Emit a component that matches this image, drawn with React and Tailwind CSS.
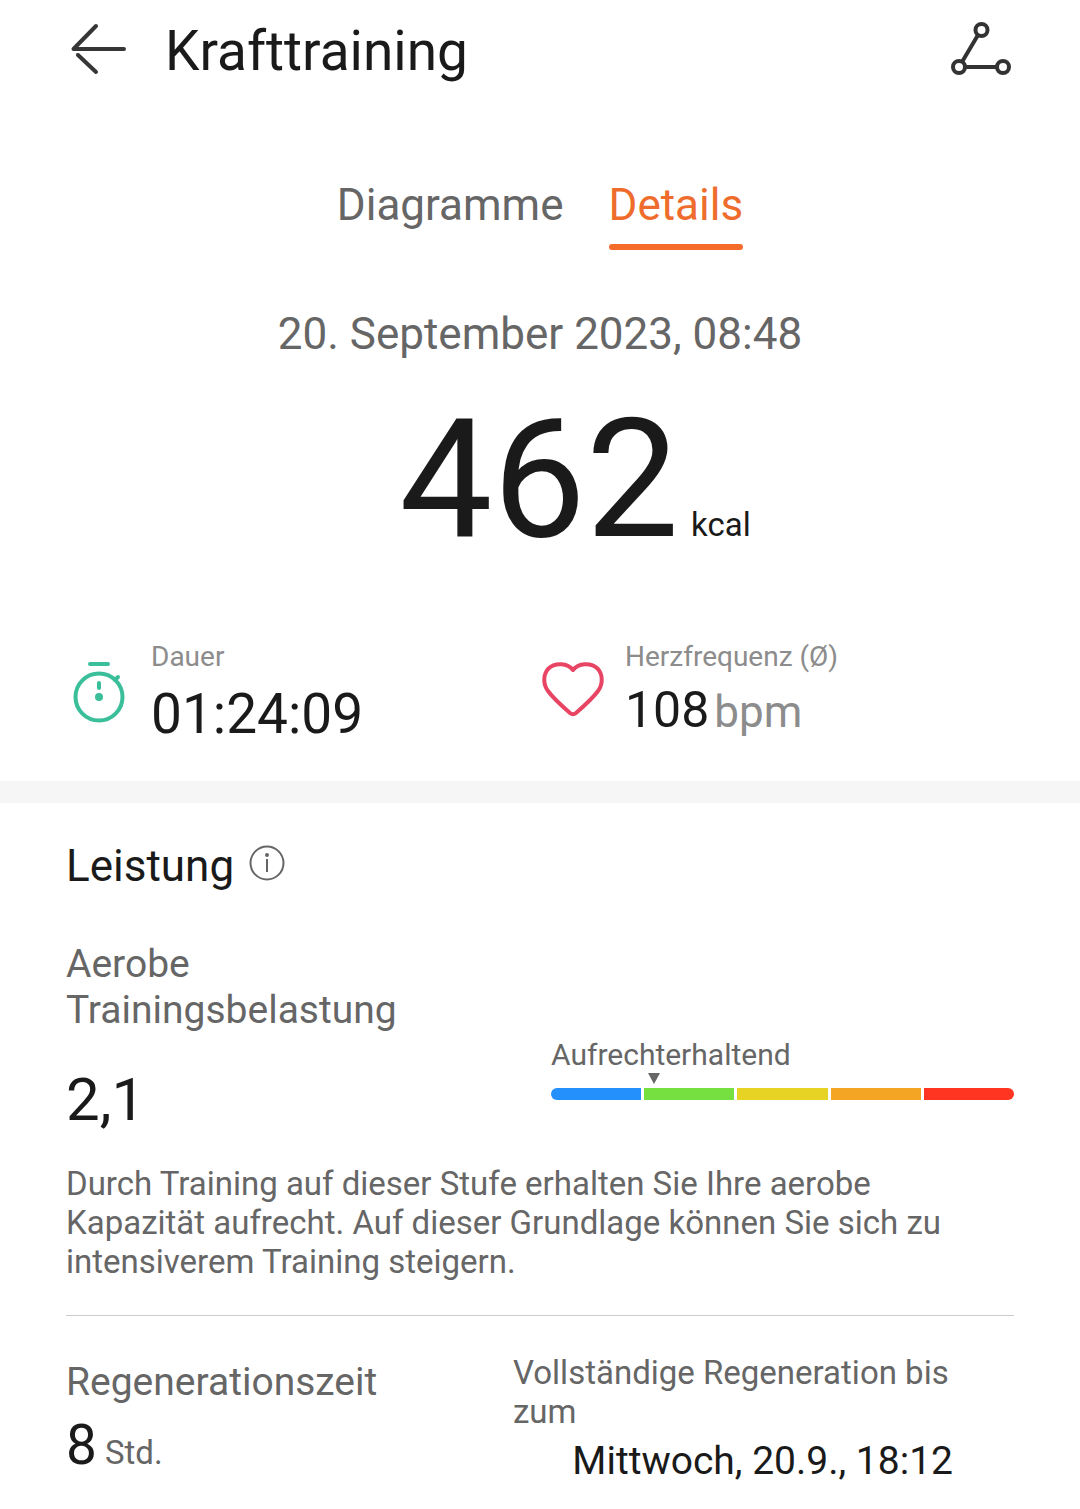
const zones = ['bg-[#2490fc]', 'bg-[#76e040]', 'bg-[#e6d324]', 'bg-[#f5a524]', 'bg-[#ff3522]']

function Header() {
  return (
    <header className="flex h-[102px] items-center px-[66px]">
      <button type="button" aria-label="Zurück" className="shrink-0">
        <svg viewBox="0 0 66 66" className="size-[66px]" fill="none" stroke="#363636" strokeWidth="4" strokeLinecap="round" strokeLinejoin="round">
          <path d="M58 31H7.5L30 8" />
          <path d="M12 37 30 54" />
          <path d="M9.500 35.500h3L15 39Z" fill="#363636" stroke="none" />
        </svg>
      </button>
      <h1 className="ml-[33px] grow text-[55px] leading-[64px]">Krafttraining</h1>
      <button type="button" aria-label="Route" className="shrink-0">
        <svg viewBox="0 0 66 66" className="size-[66px]" fill="none" stroke="#333" strokeWidth="4">
          <circle cx="33.5" cy="12" r="6" />
          <circle cx="11" cy="49" r="6" />
          <circle cx="55" cy="49" r="6" />
          <path d="M30 17 14 44M17 49h32" />
        </svg>
      </button>
    </header>
  )
}

function Tabs() {
  return (
    <nav className="mt-[77px] flex justify-center gap-[45px] text-[44px] leading-[52px]">
      <a href="#diagramme" className="text-[#666]">Diagramme</a>
      <a href="#details" aria-current="page" className="text-[#ee6c2c]">
        Details
        <span className="mt-[13px] block h-[6px] rounded-full bg-[#f56b2a]" />
      </a>
    </nav>
  )
}

function Stat({ icon, label, children }) {
  return (
    <div className="flex gap-[19px]">
      <div className="pt-5">{icon}</div>
      <div>
        <div className="text-[28px] leading-[32px] text-[#8c8c8c]">{label}</div>
        {children}
      </div>
    </div>
  )
}

export default function App() {
  return (
    <main className="bg-white pb-6 font-['Roboto',sans-serif] text-[#1a1a1a]">
      <Header />
      <Tabs />
      <p className="mt-[58px] text-center text-[44px] leading-[52px] text-[#666]">20. September 2023, 08:48</p>
      <p className="mt-[22px] ml-[70px] flex items-baseline justify-center gap-[12px]">
        <span className="text-[166px] leading-[196px]">462</span>
        <span className="text-[33px]">kcal</span>
      </p>
      <section className="mt-[63px] grid grid-cols-2 px-[66px] pb-[35px]">
        <Stat
          label="Dauer"
          icon={
            <svg viewBox="0 0 66 66" className="size-[66px]" fill="none" stroke="#3abf9a" strokeWidth="4" strokeLinecap="round">
              <circle cx="33" cy="36" r="23.5" />
              <path d="M24 3h18M49 19l3-3M33 22v5" />
              <circle cx="33" cy="36" r="4" fill="#3abf9a" stroke="none" />
            </svg>
          }
        >
          <div className="mt-[9px] text-[55px] leading-[64px]">01:24:09</div>
        </Stat>
        <Stat
          label="Herzfrequenz (Ø)"
          icon={
            <svg viewBox="0 0 66 66" className="size-[66px]" fill="none" stroke="#e84464" strokeWidth="4" strokeLinejoin="round">
              <path d="M33 9C28 2 15 1 8 8 3 14 3 23 8 30 13 37 22 45 30 52q3 2.5 6 0C44 45 53 37 58 30 63 23 63 14 58 8 51 1 38 2 33 9Z" />
            </svg>
          }
        >
          <div className="mt-[5px] flex items-baseline gap-[5px] leading-[64px]">
            <span className="text-[50px]">108</span>
            <span className="text-[44px] text-[#8c8c8c]">bpm</span>
          </div>
        </Stat>
      </section>
      <div className="h-[22px] bg-[#f6f6f6]" />
      <section className="px-[66px] pt-[36px]">
        <div className="flex items-start gap-[15px]">
          <h2 className="text-[44px] leading-[54px]">Leistung</h2>
          <button type="button" aria-label="Info" className="pt-[6px]">
            <svg viewBox="0 0 36 36" className="size-[36px]" fill="none" stroke="#666" strokeWidth="2">
              <circle cx="18" cy="18" r="16.5" />
              <path d="M18 14v13" />
              <circle cx="18" cy="10" r="2" fill="#666" stroke="none" />
            </svg>
          </button>
        </div>
        <div className="mt-[48px] grid grid-cols-[485px_1fr]">
          <div>
            <h3 className="w-[400px] text-[39px] leading-[46px] text-[#666]">Aerobe Trainingsbelastung</h3>
            <div className="mt-[31px] text-[60px] leading-[72px]">2,1</div>
          </div>
          <div className="pt-[96px]">
            <div className="text-[30px] leading-[36px] text-[#666]">Aufrechterhaltend</div>
            <svg viewBox="0 0 12 12" className="ml-[97px] block h-[11px] w-[12px]" preserveAspectRatio="none" fill="#666"><path d="M0 0h12L6 12Z" /></svg>
            <div className="mt-1 flex h-[12px] gap-[3px] overflow-hidden rounded-full">
              {zones.map((zone) => <span key={zone} className={`flex-1 ${zone}`} />)}
            </div>
          </div>
        </div>
        <p className="mt-[28px] text-[33px] leading-[39px] text-[#666]">
          Durch Training auf dieser Stufe erhalten Sie Ihre aerobe Kapazität aufrecht. Auf dieser Grundlage können Sie sich zu intensiverem Training steigern.
        </p>
        <hr className="mt-[34px] border-[#ccc]" />
      </section>
      <section className="grid grid-cols-[447px_1fr] px-[66px] pt-[37px]">
        <div>
          <h3 className="mt-[6px] text-[39px] leading-[46px] text-[#666]">Regenerationszeit</h3>
          <div className="mt-2 flex items-baseline gap-2 leading-[64px]">
            <span className="text-[55px]">8</span>
            <span className="text-[33px] text-[#666]">Std.</span>
          </div>
        </div>
        <div>
          <h3 className="text-[33px] leading-[39px] text-[#666]">Vollständige Regeneration bis zum</h3>
          <div className="mt-[6px] pr-[61px] text-right text-[39px] leading-[48px]">Mittwoch, 20.9., 18:12</div>
        </div>
      </section>
    </main>
  )
}
